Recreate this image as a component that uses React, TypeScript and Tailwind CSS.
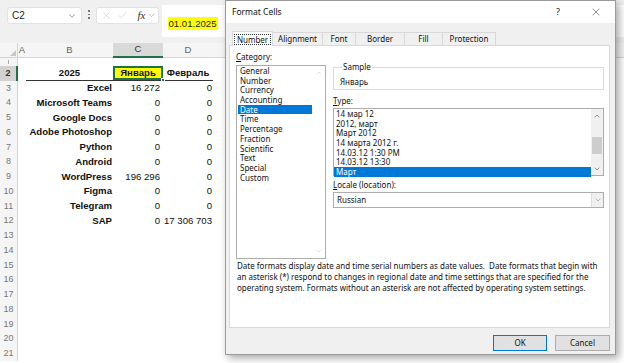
import { Check, ChevronDown, ChevronUp, X } from "lucide-react";

const data = [
  ["Excel", "16 272", "0"],
  ["Microsoft Teams", "0", "0"],
  ["Google Docs", "0", "0"],
  ["Adobe Photoshop", "0", "0"],
  ["Python", "0", "0"],
  ["Android", "0", "0"],
  ["WordPress", "196 296", "0"],
  ["Figma", "0", "0"],
  ["Telegram", "0", "0"],
  ["SAP", "0", "17 306 703"],
];

const categories = [
  "General",
  "Number",
  "Currency",
  "Accounting",
  "Date",
  "Time",
  "Percentage",
  "Fraction",
  "Scientific",
  "Text",
  "Special",
  "Custom",
];

const types = [
  "14 мар 12",
  "2012, март",
  "Март 2012",
  "14 марта 2012 г.",
  "14.03.12 1:30 PM",
  "14.03.12 13:30",
  "Март",
];

const tabs = ["Number", "Alignment", "Font", "Border", "Fill", "Protection"];
const tabWidths = ["w-[41px]", "w-[50px]", "w-[33px]", "w-[49px]", "w-[38px]", "w-[53px]"];

const RowHead = ({ n, active }: { n: number; active?: boolean }) => (
  <div
    className={
      active
        ? "flex w-[18px] shrink-0 items-center justify-center border-r-2 border-[#217346] bg-[#d2d2d2] text-[9px] text-[#333]"
        : "flex w-[18px] shrink-0 items-center justify-center border-r border-[#d4d4d4] bg-[#f5f5f5] text-[9px] text-[#777]"
    }
  >
    {n}
  </div>
);

const Sheet = () => (
  <div className="flex h-full flex-col font-['Liberation_Sans',Arial,sans-serif]">
    {/* formula bar */}
    <div className="flex h-[43px] shrink-0 items-start bg-[#f0f0f0]">
      <div className="ml-[7px] mt-[7px] flex h-[17px] w-[75px] items-center justify-between rounded-[3px] border border-[#e2e2e2] bg-white pl-[4px] pr-[4px] text-[10px] text-[#222]">
        <span>C2</span>
        <ChevronDown size={10} strokeWidth={1.5} className="text-[#555]" />
      </div>
      <div className="ml-[6px] mt-[10px] flex flex-col gap-[2px]">
        <span className="h-[1.5px] w-[1.5px] bg-[#777]" />
        <span className="h-[1.5px] w-[1.5px] bg-[#777]" />
        <span className="h-[1.5px] w-[1.5px] bg-[#777]" />
      </div>
      <div className="ml-[6px] mt-[7px] flex h-[17px] w-[63px] items-center rounded-[3px] border border-[#e2e2e2] bg-white pl-[4px] text-[#c4c4c4]">
        <X size={11} strokeWidth={1.2} />
        <Check size={11} strokeWidth={1.2} className="ml-[5px]" />
        <span className="ml-[10px] font-['Liberation_Serif',serif] text-[11px] italic text-[#333]">fx</span>
        <ChevronDown size={9} strokeWidth={1.5} className="ml-[2px] text-[#888]" />
      </div>
      <div className="ml-[3px] mt-[5px] h-[32px] flex-1 bg-white pl-[6px] pt-[5px]">
        <span className="bg-[#ffff00] px-[1px] py-[1px] text-[9.6px] text-[#222]">01.01.2025</span>
      </div>
    </div>

    {/* column headers */}
    <div className="flex h-[15px] shrink-0 bg-[#f5f5f5] text-[9.5px] text-[#666]">
      <div className="relative w-[18px] border-r border-b border-[#d4d4d4]">
        <div className="absolute bottom-[1px] right-[1px] h-0 w-0 border-l-[6px] border-t-[6px] border-l-transparent border-t-transparent border-b-[6px] border-b-[#c8c8c8]" />
      </div>
      <div className="flex w-[8px] items-center justify-center border-b border-[#d4d4d4]">A</div>
      <div className="flex w-[87px] items-center justify-center border-b border-[#d4d4d4]">B</div>
      <div className="flex w-[50px] items-center justify-center border-b-2 border-[#217346] bg-[#d9d9d9] text-[#333]">C</div>
      <div className="flex w-[50px] items-center justify-center border-b border-[#d4d4d4]">D</div>
      <div className="flex-1 border-b border-[#d4d4d4]" />
    </div>

    {/* row 1, almost hidden */}
    <div className="flex h-[8px] shrink-0">
      <div className="w-[18px] border-r border-[#d4d4d4] bg-[#f5f5f5]">
        <div className="mx-auto mt-[2px] h-[4px] w-[1px] bg-[#aaa]" />
      </div>
      <div className="flex-1" />
    </div>

    {/* row 2 */}
    <div className="flex h-[15px] shrink-0 text-[9.6px] font-bold text-[#111]">
      <RowHead n={2} active />
      <div className="w-[8px]" />
      <div className="flex w-[87px] items-center justify-center border-b border-[#333]">2025</div>
      <div className="relative flex w-[50px] items-center justify-center border-b border-[#333]">
        <div className="absolute inset-0 border-2 border-[#217346] bg-[#ffff00]" />
        <div className="absolute -bottom-[2px] -right-[2px] h-[4px] w-[4px] border border-white bg-[#217346]" />
        <span className="relative">Январь</span>
      </div>
      <div className="flex w-[50px] items-center justify-center border-b border-[#333]">Февраль</div>
      <div className="flex-1" />
    </div>

    {data.map(([name, jan, feb], i) => (
      <div key={name} className="flex h-[14.75px] shrink-0 text-[9.6px] text-[#111]">
        <RowHead n={i + 3} />
        <div className="w-[8px]" />
        <div className="flex w-[87px] items-center justify-end pr-[1px] font-bold">{name}</div>
        <div className="flex w-[50px] items-center justify-end pr-[3px]">{jan}</div>
        <div className="flex w-[50px] items-center justify-end pr-[1px]">{feb}</div>
        <div className="flex-1" />
      </div>
    ))}

    {Array.from({ length: 9 }, (_, i) => (
      <div key={i} className="flex h-[14.75px] shrink-0">
        <RowHead n={i + 13} />
        <div className="flex-1" />
      </div>
    ))}
  </div>
);

const Dialog = () => (
  <div className="absolute left-[225px] top-0 flex h-[355px] w-[391px] flex-col border border-[#9a9a9a] bg-[#f0f0f0] font-['Noto_Sans',sans-serif] text-[8px] text-[#111] shadow-[3px_3px_8px_rgba(0,0,0,0.35)]">
    <div className="flex h-[22px] shrink-0 items-center bg-white pl-[6px] text-[8.5px]">
      <span>Format Cells</span>
      <span className="ml-auto mr-[30px] text-[9px]">?</span>
      <X size={12} strokeWidth={1} className="mr-[13px] text-[#222]" />
    </div>

    <div className="flex flex-1 flex-col pl-[3px] pr-[5px]">
      <div className="mt-[7px] flex h-[15px] items-end pl-[3px]">
        {tabs.map((t, i) =>
          i === 0 ? (
            <div
              key={t}
              className={`relative z-10 -mb-[1px] flex h-[15px] items-center justify-center border border-b-0 border-[#d9d9d9] bg-white ${tabWidths[i]}`}
            >
              <span className="border border-dotted border-[#333] px-[2px] leading-[9px]">{t}</span>
            </div>
          ) : (
            <div
              key={t}
              className={`flex h-[13px] items-center justify-center border border-b-0 border-l-0 border-[#d9d9d9] bg-[#f0f0f0] ${tabWidths[i]}`}
            >
              {t}
            </div>
          )
        )}
      </div>

      <div className="flex h-[283px] shrink-0 flex-col border border-[#d9d9d9] bg-white pl-[6px] pt-[7px]">
        <div className="flex">
          <div className="flex w-[90px] flex-col">
            <div className="h-[12px] leading-[7px]">
              <span className="underline">C</span>ategory:
            </div>
            <div className="relative flex h-[194px] border border-[#adadad]">
              <div className="flex w-[75px] flex-col pl-[1px]">
                {categories.map((c) => (
                  <div
                    key={c}
                    className={
                      c === "Date"
                        ? "h-[9.7px] bg-[#0078d7] pl-[2px] leading-[9.7px] text-white"
                        : "h-[9.7px] pl-[2px] leading-[9.7px]"
                    }
                  >
                    {c}
                  </div>
                ))}
              </div>
              <div className="flex flex-1 flex-col items-center justify-between py-[3px] text-[#c8c8c8]">
                <ChevronUp size={8} strokeWidth={1.5} />
                <ChevronDown size={8} strokeWidth={1.5} />
              </div>
            </div>
          </div>

          <div className="ml-[7px] flex w-[271px] flex-col">
            <fieldset className="mt-[10px] h-[27px] border border-[#dcdcdc] pl-[6px]">
              <legend className="ml-[2px] px-[1px] leading-[8px]">Sample</legend>
              <div className="mt-[5px]">Январь</div>
            </fieldset>
            <div className="mt-[6px] h-[12px] leading-[10px]">
              <span className="underline">T</span>ype:
            </div>
            <div className="flex h-[68px] border border-[#adadad]">
              <div className="flex flex-1 flex-col">
                {types.map((t) => (
                  <div
                    key={t}
                    className={
                      t === "Март"
                        ? "h-[9.67px] bg-[#0078d7] pl-[2px] leading-[9.67px] text-white"
                        : "h-[9.67px] pl-[2px] leading-[9.67px]"
                    }
                  >
                    {t}
                  </div>
                ))}
              </div>
              <div className="flex w-[12px] flex-col items-center bg-[#f0f0f0] text-[#606060]">
                <ChevronUp size={8} strokeWidth={2} className="mt-[3px]" />
                <div className="mt-[17px] h-[17px] w-[10px] bg-[#cdcdcd]" />
                <ChevronDown size={8} strokeWidth={2} className="mt-auto mb-[2px]" />
              </div>
            </div>
            <div className="mt-[4px] h-[12px] leading-[10px]">
              <span className="underline">L</span>ocale (location):
            </div>
            <div className="flex h-[16px] items-center border border-[#adadad] pl-[3px]">
              <span>Russian</span>
              <div className="ml-auto flex h-full w-[12px] items-center justify-center border-l border-[#dcdcdc] bg-[#f0f0f0] text-[#777]">
                <ChevronDown size={8} strokeWidth={1.5} />
              </div>
            </div>
          </div>
        </div>

        <p className="mt-[1px] pl-[1px] pr-[8px] leading-[11px]">
          Date formats display date and time serial numbers as date values.&nbsp; Date formats that begin with an asterisk
          (*) respond to changes in regional date and time settings that are specified for the operating system. Formats
          without an asterisk are not affected by operating system settings.
        </p>
      </div>

      <div className="mt-[7px] flex justify-end gap-[8px]">
        <button className="h-[16px] w-[54px] border border-[#0078d7] bg-[#e1e1e1] text-[8px]">OK</button>
        <button className="h-[16px] w-[55px] border border-[#adadad] bg-[#e1e1e1] text-[8px]">Cancel</button>
      </div>
    </div>
  </div>
);

export default function App() {
  return (
    <div className="relative h-[363px] w-[624px] overflow-hidden bg-white">
      <Sheet />
      <Dialog />
    </div>
  );
}
